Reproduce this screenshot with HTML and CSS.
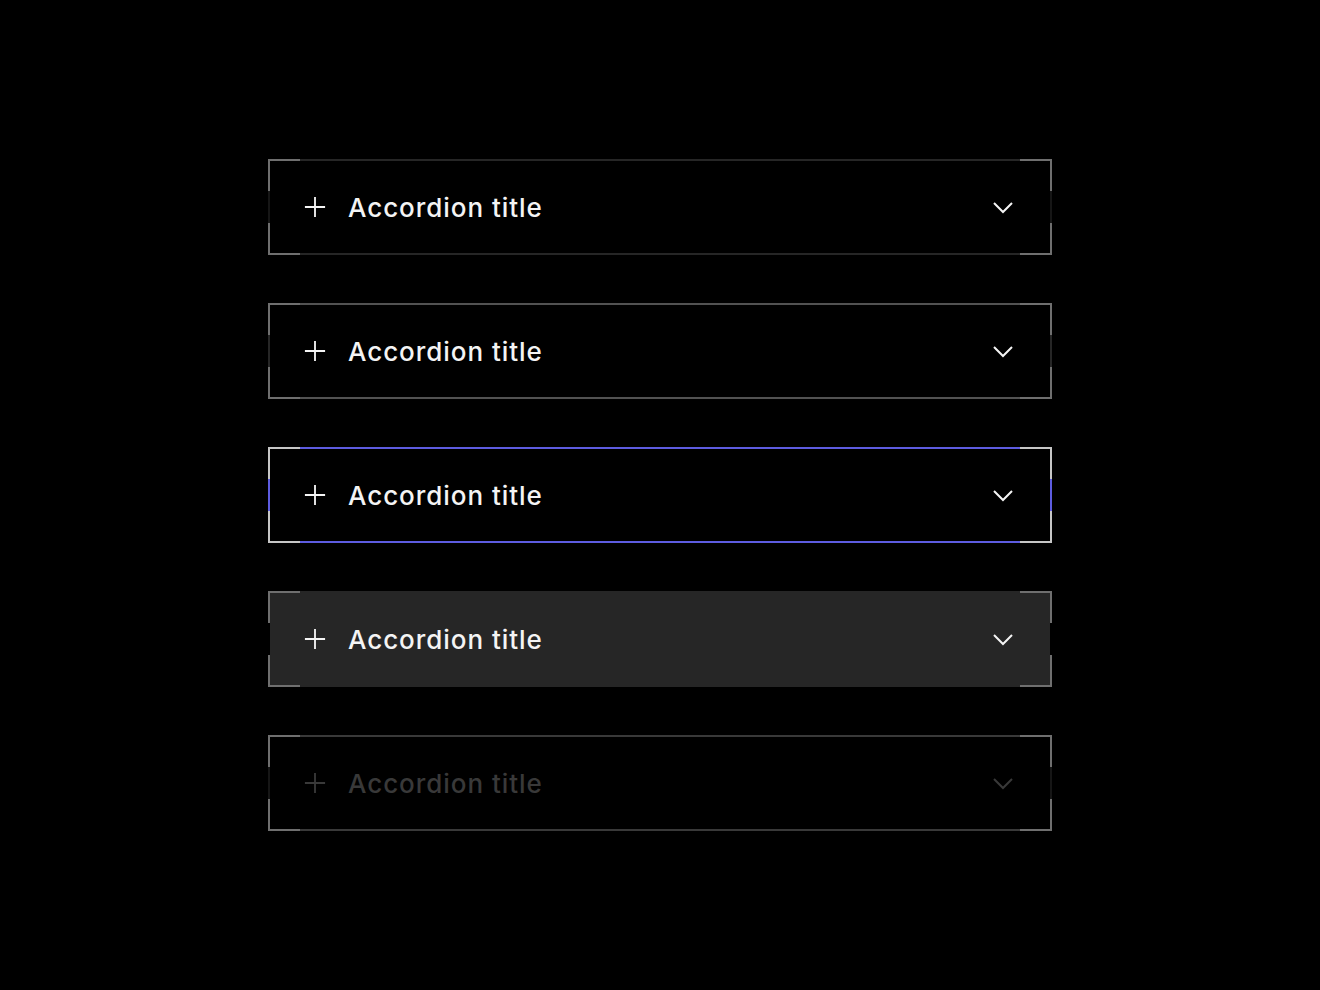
FILE: index.html
```html
<!DOCTYPE html>
<html lang="en">
<head>
<meta charset="utf-8">
<title>Accordion states</title>
<link rel="stylesheet" href="styles.css">
</head>
<body>
<main class="stack">
  <div class="acc acc--default">
    <svg class="ico plus" viewBox="0 0 24 24"><path d="M12 1v22M1 12h22"/></svg>
    <span class="title">Accordion title</span>
    <svg class="ico chev" viewBox="0 0 24 24"><path d="M3 8l9 9 9-9"/></svg>
  </div>
  <div class="acc acc--hover">
    <svg class="ico plus" viewBox="0 0 24 24"><path d="M12 1v22M1 12h22"/></svg>
    <span class="title">Accordion title</span>
    <svg class="ico chev" viewBox="0 0 24 24"><path d="M3 8l9 9 9-9"/></svg>
  </div>
  <div class="acc acc--focus">
    <svg class="ico plus" viewBox="0 0 24 24"><path d="M12 1v22M1 12h22"/></svg>
    <span class="title">Accordion title</span>
    <svg class="ico chev" viewBox="0 0 24 24"><path d="M3 8l9 9 9-9"/></svg>
  </div>
  <div class="acc acc--active">
    <svg class="ico plus" viewBox="0 0 24 24"><path d="M12 1v22M1 12h22"/></svg>
    <span class="title">Accordion title</span>
    <svg class="ico chev" viewBox="0 0 24 24"><path d="M3 8l9 9 9-9"/></svg>
  </div>
  <div class="acc acc--disabled">
    <svg class="ico plus" viewBox="0 0 24 24"><path d="M12 1v22M1 12h22"/></svg>
    <span class="title">Accordion title</span>
    <svg class="ico chev" viewBox="0 0 24 24"><path d="M3 8l9 9 9-9"/></svg>
  </div>
</main>
</body>
</html>
```
FILE: styles.css
```css
html, body {
  margin: 0;
  background: #000;
}
body {
  font-family: Inter, "Noto Sans", "Liberation Sans", sans-serif;
  color: #f4f4f4;
}
.stack {
  width: 784px;
  margin: 159px auto 0;
  display: flex;
  flex-direction: column;
  gap: 48px;
}
.acc {
  --corner: #6f6f6f;
  --edge: #262626;
  --side: #161616;
  --fg: #f4f4f4;
  position: relative;
  box-sizing: border-box;
  height: 96px;
  display: flex;
  align-items: center;
  padding: 0 35px 0 34px;
  border: 2px solid var(--edge);
  border-left-color: var(--side);
  border-right-color: var(--side);
  background-clip: padding-box;
  color: var(--fg);
}
.acc::before {
  content: "";
  position: absolute;
  inset: -2px;
  pointer-events: none;
  background:
    linear-gradient(var(--corner), var(--corner)) left top / 32px 2px no-repeat,
    linear-gradient(var(--corner), var(--corner)) left top / 2px 32px no-repeat,
    linear-gradient(var(--corner), var(--corner)) right top / 32px 2px no-repeat,
    linear-gradient(var(--corner), var(--corner)) right top / 2px 32px no-repeat,
    linear-gradient(var(--corner), var(--corner)) left bottom / 32px 2px no-repeat,
    linear-gradient(var(--corner), var(--corner)) left bottom / 2px 32px no-repeat,
    linear-gradient(var(--corner), var(--corner)) right bottom / 32px 2px no-repeat,
    linear-gradient(var(--corner), var(--corner)) right bottom / 2px 32px no-repeat;
}
.acc--hover {
  --edge: #525252;
  --side: #262626;
}
.acc--focus {
  --corner: #c6c6c6;
  --edge: #5d5ce0;
  --side: #5d5ce0;
}
.acc--active {
  --edge: #262626;
  --side: #000;
  background-color: #262626;
}
.acc--disabled {
  --edge: #393939;
  --side: #161616;
  --fg: #393939;
}
.ico {
  width: 24px;
  height: 24px;
  flex: none;
  fill: none;
  stroke: currentColor;
}
.plus {
  width: 22px;
  height: 22px;
  stroke-width: 2;
}
.chev {
  stroke-width: 2;
  margin-left: auto;
}
.title {
  margin-left: 22px;
  margin-top: 2px;
  font-size: 26px;
  font-weight: 500;
  letter-spacing: 0.95px;
  line-height: 1;
}
```
